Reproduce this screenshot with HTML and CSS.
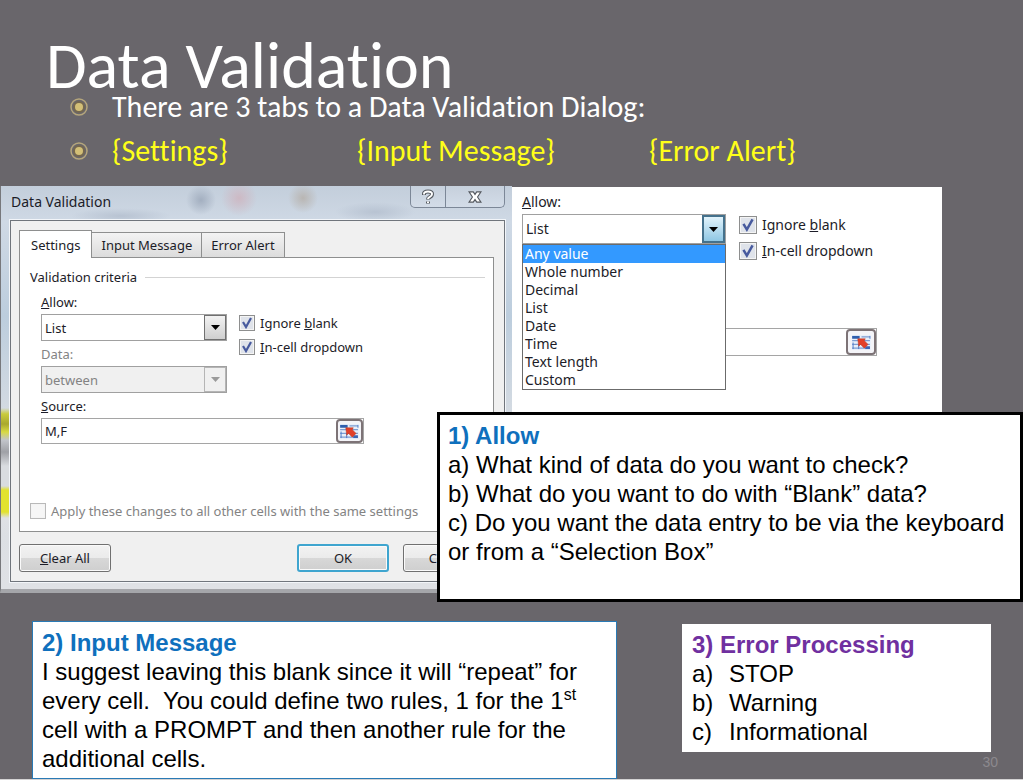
FILE: index.html
```html
<!DOCTYPE html>
<html lang="en">
<head>
    <meta charset="UTF-8">
    <meta name="viewport" content="width=device-width, initial-scale=1.0">
    <title>Data Validation</title>
    <link rel="stylesheet" href="styles.css">
</head>
<body>
    <svg width="0" height="0" class="defs" aria-hidden="true">
        <symbol id="bullet" viewBox="0 0 18 18">
            <circle cx="9" cy="9" r="8" fill="none" stroke="#b5a67c" stroke-width="1.5"/>
            <circle cx="9" cy="9" r="6" fill="#74674f"/>
            <circle cx="9" cy="9" r="4" fill="#d3bf76"/>
        </symbol>
        <symbol id="arrow" viewBox="0 0 9 5">
            <path d="M0 0h9L4.500 5z" fill="currentColor"/>
        </symbol>
        <symbol id="range" viewBox="0 0 20 16">
            <rect width="20" height="16" fill="#e8effa"/>
            <path d="M0 1h8v3H0z" fill="#2f5fae"/>
            <path d="M10 2h9M0 6h19M0 10h19M0 14h19" stroke="#7d9dd2" stroke-width="1.5"/>
            <path d="M1 8v7M7 10v5M19 1v3" stroke="#4a78c4"/>
            <path d="M14 12h5v3h-5z" fill="#3c66b4"/>
            <path d="M6 4h8l-1 2 4 4-4 4-4-4-2 2z" fill="#e2402a" stroke="#b9341f" stroke-width=".5"/>
        </symbol>
    </svg>

    <div class="slide">
        <header>
            <h1>Data Validation</h1>
            <ul class="points">
                <li>
                    <svg class="bullet"><use href="#bullet"/></svg>
                    <span>There are 3 tabs to a Data Validation Dialog:</span>
                </li>
                <li class="tab-names">
                    <svg class="bullet"><use href="#bullet"/></svg>
                    <span>{Settings}</span>
                    <span>{Input Message}</span>
                    <span>{Error Alert}</span>
                </li>
            </ul>
        </header>

        <main class="stage">
            <section class="glass">
                <div class="titlebar">
                    <h2>Data Validation</h2>
                    <div class="window-btns">
                        <button type="button" aria-label="Help">
                            <svg width="12" height="16" viewBox="0 0 12 16">
                                <path d="M2 6V5Q2 2.500 6 2.500t4 2.500q0 2-2.500 3.200Q6 9 6 10.500M6 12.500v2" fill="none" stroke="#54585f" stroke-width="4"/>
                                <path d="M2 5.500V5Q2 2.500 6 2.500t4 2.500q0 2-2.500 3.200Q6 9 6 10M6 12.500v1.500" fill="none" stroke="#fff" stroke-width="2"/>
                            </svg>
                        </button>
                        <button type="button" aria-label="Close" class="close">
                            <svg width="14" height="12" viewBox="0 0 16 14">
                                <path d="M1 1h5l2 3 2-3h5l-4 6 4 6h-5l-2-3-2 3H1l4-6z" fill="#fff" stroke="#54585f" stroke-width="1.300"/>
                            </svg>
                        </button>
                    </div>
                </div>

                <form class="dialog">
                    <div class="tabs">
                        <button type="button" class="active">Settings</button>
                        <button type="button">Input Message</button>
                        <button type="button">Error Alert</button>
                    </div>
                    <div class="page">
                        <div class="legend">Validation criteria</div>
                        <div class="criteria">
                            <div class="fields">
                                <label for="allow"><u>A</u>llow:</label>
                                <div class="select">
                                    <select id="allow"><option>List</option></select>
                                    <span class="arrow"><svg><use href="#arrow"/></svg></span>
                                </div>
                                <label for="data" class="off">Data:</label>
                                <div class="select disabled">
                                    <select id="data" disabled><option>between</option></select>
                                    <span class="arrow"><svg><use href="#arrow"/></svg></span>
                                </div>
                            </div>
                            <div class="checks">
                                <label><input type="checkbox" checked><span>Ignore <u>b</u>lank</span></label>
                                <label><input type="checkbox" checked><span><u>I</u>n-cell dropdown</span></label>
                            </div>
                        </div>
                        <div class="source">
                            <label for="source"><u>S</u>ource:</label>
                            <div class="range-box">
                                <input id="source" type="text" value="M,F">
                                <button type="button" aria-label="Select range"><svg><use href="#range"/></svg></button>
                            </div>
                        </div>
                        <label class="apply off"><input type="checkbox" disabled><span>Apply these changes to all other cells with the same settings</span></label>
                    </div>
                    <div class="actions">
                        <button type="button"><u>C</u>lear All</button>
                        <button type="button" class="default">OK</button>
                        <button type="button">Cancel</button>
                    </div>
                </form>
            </section>

            <section class="allow-panel">
                <div class="allow-field">
                    <label for="allow-open"><u>A</u>llow:</label>
                    <div class="select open">
                        <select id="allow-open"><option>List</option></select>
                        <span class="arrow"><svg><use href="#arrow"/></svg></span>
                        <ul class="options">
                            <li class="selected">Any value</li>
                            <li>Whole number</li>
                            <li>Decimal</li>
                            <li>List</li>
                            <li>Date</li>
                            <li>Time</li>
                            <li>Text length</li>
                            <li>Custom</li>
                        </ul>
                    </div>
                </div>
                <div class="checks">
                    <label><input type="checkbox" checked><span>Ignore <u>b</u>lank</span></label>
                    <label><input type="checkbox" checked><span><u>I</u>n-cell dropdown</span></label>
                </div>
                <div class="range-box">
                    <input type="text" aria-label="Source">
                    <button type="button" aria-label="Select range"><svg><use href="#range"/></svg></button>
                </div>
            </section>

            <article class="note note-allow">
                <h3>1) Allow</h3>
                <p>a) What kind of data do you want to check?</p>
                <p>b) What do you want to do with “Blank” data?</p>
                <p>c) Do you want the data entry to be via the keyboard or from a “Selection Box”</p>
            </article>
        </main>

        <footer>
            <article class="note note-input">
                <h3>2) Input Message</h3>
                <p>I suggest leaving this blank since it will “repeat” for every cell.&nbsp; You could define two rules, 1 for the 1<sup>st</sup> cell with a PROMPT and then another rule for the additional cells.</p>
            </article>
            <div class="side">
                <article class="note note-error">
                    <h3>3) Error Processing</h3>
                    <ul>
                        <li><span>a)</span>STOP</li>
                        <li><span>b)</span>Warning</li>
                        <li><span>c)</span>Informational</li>
                    </ul>
                </article>
                <div class="page-number">30</div>
            </div>
        </footer>
    </div>
</body>
</html>
```
FILE: styles.css
```css
:root {
    --slide: #69666b;
    --ink: #1c1c28;
    --line: #8e8f8f;
    --blue: #0f70bd;
}
* {
    box-sizing: border-box;
}
body {
    margin: 0;
    background: #d4d3d4;
}
h1, h2, h3, p, ul {
    margin: 0;
    padding: 0;
    font-weight: normal;
}
ul {
    list-style: none;
}
.defs {
    position: absolute;
}
.slide {
    min-height: calc(100vh - 1px);
    background: var(--slide);
}

/* heading */
header {
    height: 186px;
    padding: 30px 46px 0;
    color: #fff;
    font-family: Carlito, Lato, sans-serif;
    font-variant-ligatures: none;
}
h1 {
    font-size: 66px;
    line-height: 72px;
    height: 55px;
}
.points {
    padding-left: 24px;
    font-size: 30px;
    line-height: 44px;
}
.points li {
    display: grid;
    grid-template-columns: 42px auto;
    align-items: center;
}
.points .tab-names {
    grid-template-columns: 42px 245px 292px auto;
    color: #ffff19;
}
.bullet {
    width: 18px;
    height: 18px;
}

/* dialogs */
.stage {
    position: relative;
    display: grid;
    grid-template-columns: 512fr 430fr;
    padding-right: 81px;
    color: var(--ink);
    font-family: "Noto Sans", sans-serif;
    font-size: 13px;
    line-height: 18px;
}
.stage button,
.stage select,
.stage input {
    margin: 0;
    padding: 0;
    color: inherit;
    font: inherit;
}
.glass {
    padding: 0 7px 7px 9px;
    border-left: 1px solid #77787c;
    border-bottom: 4px solid #a5a6aa;
    background:
        linear-gradient(transparent 222px, #c9cb3c 228px, #a9a82e 238px, #d8da42 246px, #c2c5cb 254px, #9fa1a6 266px, #d9dce0 280px, #d9dce0 300px, #e2e22e 304px, #e2e22e 326px, #dfe1e5 332px, transparent 350px) left / 9px 100% no-repeat,
        radial-gradient(circle at 200px 14px, #a3afc0 0, transparent 15px),
        radial-gradient(circle at 238px 12px, #cdb9c4 0, transparent 18px),
        radial-gradient(circle at 302px 12px, #b9b6b3 0, transparent 15px),
        radial-gradient(ellipse 40px 10px at 374px 26px, #b8c3d2 0, transparent 100%),
        radial-gradient(ellipse 50px 8px at 120px 30px, #b8c3d2 0, transparent 100%),
        linear-gradient(#c3cedb, #cfd9e5 36px, #bccddd 130px, #d5dbe2 230px, #dfe1e5);
}
.titlebar {
    display: flex;
    justify-content: space-between;
    height: 34px;
}
h2 {
    padding: 6px 0 0 1px;
    font-size: 14px;
    line-height: 20px;
}
.window-btns {
    display: flex;
    height: 22px;
}
.window-btns button {
    display: grid;
    place-items: center;
    width: 36px;
    border: 1px solid #7c8797;
    border-top: 0;
    border-radius: 0 0 0 5px;
    background: linear-gradient(#c6d0dc, #d3dce8);
}
.window-btns .close {
    width: 59px;
    border-left: 0;
    border-radius: 0 0 5px 0;
}
.dialog {
    padding: 9px 10px 9px 9px;
    border: 1px solid #70757c;
    box-shadow: 0 0 0 1px #f2f5f9;
    background: #f0f0f0;
}
.tabs {
    display: flex;
    align-items: flex-end;
    height: 27px;
    margin-left: -1px;
}
.tabs button {
    height: 25px;
    padding: 0 9px;
    border: 1px solid var(--line);
    border-bottom: 0;
    background: linear-gradient(#f3f3f3, #dcdcdc);
}
.tabs button + button {
    border-left: 0;
}
.tabs button.active {
    position: relative;
    height: 28px;
    margin-bottom: -1px;
    padding: 0 11px;
    border-left: 1px solid var(--line);
    background: #fff;
}
.page {
    margin-left: -1px;
    padding: 10px 8px 11px 10px;
    border: 1px solid var(--line);
    background: #fff;
}
.legend {
    display: flex;
    align-items: center;
    gap: 8px;
}
.legend::after {
    content: "";
    flex: 1;
    border-top: 1px solid #d3d3d3;
}
.criteria {
    display: flex;
    gap: 12px;
    padding: 7px 0 0 11px;
}
.fields {
    width: 186px;
}
.fields label,
.source label {
    display: block;
    padding-bottom: 3px;
}
.off {
    color: #838383;
}
.select {
    position: relative;
    display: flex;
    height: 27px;
    margin-bottom: 4px;
    border: 1px solid #a0a0a0;
    background: #fff;
}
.select select {
    flex: 1;
    min-width: 0;
    padding-left: 3px;
    border: 0;
    background: none;
    appearance: none;
    opacity: 1;
}
.arrow {
    display: grid;
    place-items: center;
    width: 22px;
    border: 1px solid #707070;
    background: linear-gradient(#f2f2f2, #cfcfcf);
    color: #000;
}
.arrow svg {
    width: 9px;
    height: 5px;
}
.disabled {
    background: #f0f0f0;
    color: #838383;
}
.disabled .arrow {
    border-color: #b5b5b5;
    background: #f0f0f0;
    color: #9a9a9a;
}
.checks {
    display: flex;
    flex-direction: column;
    gap: 6px;
    padding-top: 21px;
}
.checks label,
.apply {
    display: flex;
    align-items: center;
    gap: 5px;
    white-space: nowrap;
}
input[type="checkbox"] {
    width: 16px;
    height: 16px;
    border: 1px solid var(--line);
    box-shadow: inset 0 0 0 1px #f4f4f4;
    background: #dfe3ea;
    appearance: none;
}
input[type="checkbox"]:checked {
    background: url("data:image/svg+xml,%3Csvg xmlns='http://www.w3.org/2000/svg' viewBox='0 0 14 14'%3E%3Cpath d='M3 6l3 5 5-9' fill='none' stroke='%23475a9e' stroke-width='2.200'/%3E%3C/svg%3E") center, #dfe3ea;
}
input[type="checkbox"]:disabled {
    border-color: #b9b9b9;
    background: #f6f6f6;
}
.source {
    padding-left: 11px;
}
.range-box {
    display: flex;
    width: 323px;
    height: 26px;
    border: 1px solid #a5a5a5;
    background: #fff;
}
.range-box input {
    flex: 1;
    min-width: 0;
    padding-left: 3px;
    border: 0;
    background: none;
}
.range-box button {
    display: grid;
    place-items: center;
    width: 27px;
    border: 2px solid #7d7376;
    border-radius: 4px;
    background: #f4f4f8;
}
.range-box svg {
    width: 19px;
    height: 15px;
}
.apply {
    margin-top: 58px;
}
.actions {
    display: flex;
    gap: 14px;
    margin: 12px -1px 0;
}
.actions button {
    width: 92px;
    height: 28px;
    border: 1px solid #707070;
    border-radius: 3px;
    box-shadow: inset 0 0 0 1px #fafafa;
    background: linear-gradient(#f2f2f2, #ebebeb 50%, #d8d8d8 50%, #cfcfcf);
}
.actions button:first-child {
    margin-right: auto;
}
.actions .default {
    border: 2px solid #3fa5cf;
}

.allow-panel {
    display: grid;
    grid-template-columns: 204px 1fr;
    grid-template-rows: 135px auto;
    column-gap: 13px;
    margin-top: 1px;
    padding: 6px 65px 0 10px;
    background: #fff;
    font-size: 14px;
}
.allow-panel .allow-field > label {
    display: block;
    padding-bottom: 3px;
}
.allow-panel .checks {
    gap: 8px;
    padding-top: 23px;
}
.allow-panel input[type="checkbox"] {
    width: 18px;
    height: 18px;
}
.allow-panel > .range-box {
    grid-column: 1 / 3;
    width: auto;
    height: 28px;
}
.allow-panel .range-box button {
    width: 30px;
}
.open {
    height: 30px;
}
.open .arrow {
    width: 23px;
    border: 2px solid #44718c;
    background: linear-gradient(#e2f3fb, #8fc7e4);
}
.options {
    position: absolute;
    top: 29px;
    left: -1px;
    right: -1px;
    border: 1px solid #6b6b6b;
    background: #fff;
}
.options li {
    padding-left: 2px;
    line-height: 18px;
}
.options .selected {
    background: #3399ff;
    color: #fff;
}

/* notes */
.note {
    background: #fff;
    color: #000;
    font-family: "Liberation Sans", Arial, sans-serif;
    font-size: 24px;
    line-height: 29px;
}
.note h3 {
    color: var(--blue);
    font-size: 24px;
    font-weight: bold;
}
.note sup {
    font-size: 16px;
    line-height: 0;
}
.note-allow {
    position: absolute;
    top: 226px;
    right: 0;
    width: 586px;
    height: 190px;
    padding: 6px 4px 0 8px;
    border: 3px solid #000;
}
footer {
    display: flex;
    justify-content: space-between;
    padding: 28px 0 0 32px;
}
.note-input {
    width: 585px;
    padding: 6px 9px 5px;
    border: 1px solid #2a7ab5;
}
.side {
    width: 341px;
    padding-top: 3px;
}
.note-error {
    width: 309px;
    padding: 6px 10px;
}
.note-error h3 {
    color: #7030a0;
}
.note-error li {
    display: grid;
    grid-template-columns: 37px auto;
}
.page-number {
    padding: 2px 25px 0 0;
    color: #8c898e;
    font-family: "Liberation Sans", Arial, sans-serif;
    font-size: 14px;
    line-height: 16px;
    text-align: right;
}
```
